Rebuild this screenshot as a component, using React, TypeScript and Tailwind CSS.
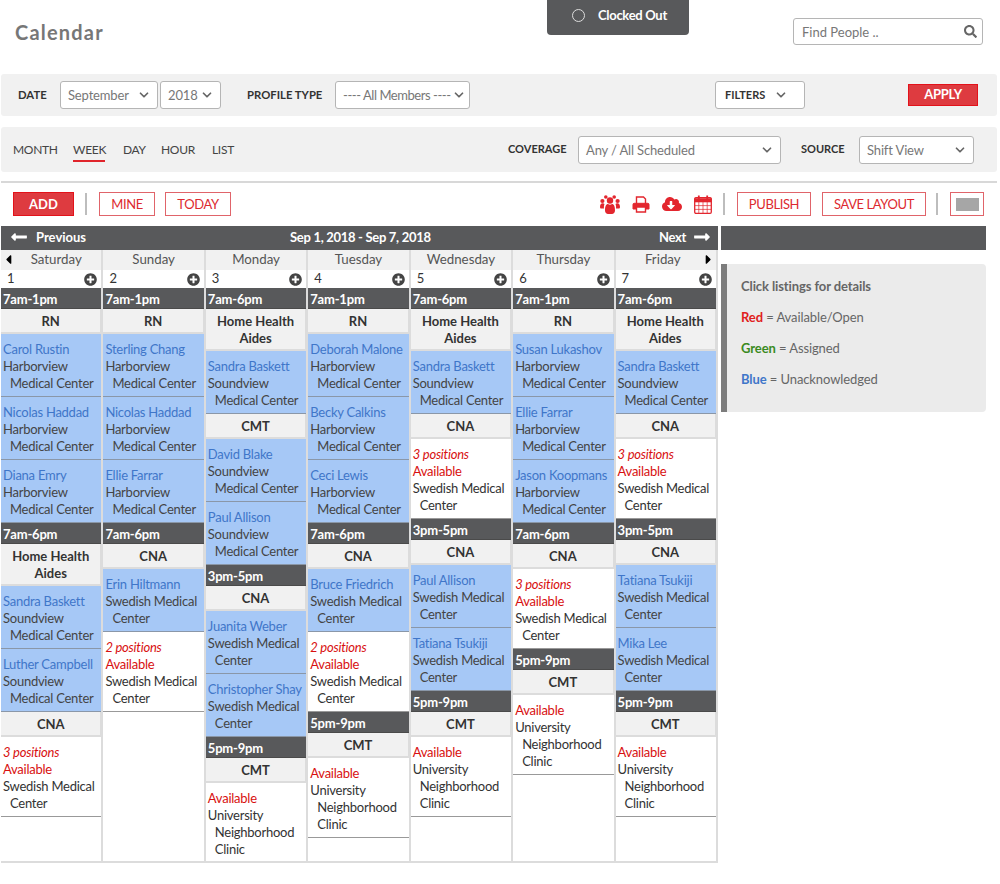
import { ChevronDown } from "lucide-react";
import {
  FaCloudDownloadAlt,
  FaSearch,
  FaPlusCircle,
  FaLongArrowAltLeft,
  FaLongArrowAltRight,
  FaCaretLeft,
  FaCaretRight,
} from "react-icons/fa";

type Item =
  | { t: "shift"; v: string }
  | { t: "role"; v: string }
  | { t: "p"; name: string; a: string; b: string }
  | { t: "open"; pos?: string; a: string; b: string; c?: string };

const shift = (v: string): Item => ({ t: "shift", v });
const role = (v: string): Item => ({ t: "role", v });
const hv = (name: string): Item => ({ t: "p", name, a: "Harborview", b: "Medical Center" });
const sv = (name: string): Item => ({ t: "p", name, a: "Soundview", b: "Medical Center" });
const sw = (name: string): Item => ({ t: "p", name, a: "Swedish Medical", b: "Center" });
const openSw = (pos: string): Item => ({ t: "open", pos, a: "Swedish Medical", b: "Center" });
const openU: Item = { t: "open", a: "University", b: "Neighborhood", c: "Clinic" };

const days: { d: string; n: number; items: Item[] }[] = [
  {
    d: "Saturday",
    n: 1,
    items: [
      shift("7am-1pm"), role("RN"), hv("Carol Rustin"), hv("Nicolas Haddad"), hv("Diana Emry"),
      shift("7am-6pm"), role("Home Health Aides"), sv("Sandra Baskett"), sv("Luther Campbell"),
      role("CNA"), openSw("3 positions"),
    ],
  },
  {
    d: "Sunday",
    n: 2,
    items: [
      shift("7am-1pm"), role("RN"), hv("Sterling Chang"), hv("Nicolas Haddad"), hv("Ellie Farrar"),
      shift("7am-6pm"), role("CNA"), sw("Erin Hiltmann"), openSw("2 positions"),
    ],
  },
  {
    d: "Monday",
    n: 3,
    items: [
      shift("7am-6pm"), role("Home Health Aides"), sv("Sandra Baskett"),
      role("CMT"), sv("David Blake"), sv("Paul Allison"),
      shift("3pm-5pm"), role("CNA"), sw("Juanita Weber"), sw("Christopher Shay"),
      shift("5pm-9pm"), role("CMT"), openU,
    ],
  },
  {
    d: "Tuesday",
    n: 4,
    items: [
      shift("7am-1pm"), role("RN"), hv("Deborah Malone"), hv("Becky Calkins"), hv("Ceci Lewis"),
      shift("7am-6pm"), role("CNA"), sw("Bruce Friedrich"), openSw("2 positions"),
      shift("5pm-9pm"), role("CMT"), openU,
    ],
  },
  {
    d: "Wednesday",
    n: 5,
    items: [
      shift("7am-6pm"), role("Home Health Aides"), sv("Sandra Baskett"),
      role("CNA"), openSw("3 positions"),
      shift("3pm-5pm"), role("CNA"), sw("Paul Allison"), sw("Tatiana Tsukiji"),
      shift("5pm-9pm"), role("CMT"), openU,
    ],
  },
  {
    d: "Thursday",
    n: 6,
    items: [
      shift("7am-1pm"), role("RN"), hv("Susan Lukashov"), hv("Ellie Farrar"), hv("Jason Koopmans"),
      shift("7am-6pm"), role("CNA"), openSw("3 positions"),
      shift("5pm-9pm"), role("CMT"), openU,
    ],
  },
  {
    d: "Friday",
    n: 7,
    items: [
      shift("7am-6pm"), role("Home Health Aides"), sv("Sandra Baskett"),
      role("CNA"), openSw("3 positions"),
      shift("3pm-5pm"), role("CNA"), sw("Tatiana Tsukiji"), sw("Mika Lee"),
      shift("5pm-9pm"), role("CMT"), openU,
    ],
  },
];

function UsersIcon() {
  return (
    <svg width="20" height="19" viewBox="0 0 20 19" className="ml-[369px] text-[#e3262e]" fill="currentColor">
      <circle cx="10" cy="5.500" r="3.200" />
      <circle cx="5.800" cy="2" r="1.800" />
      <circle cx="14.200" cy="2" r="1.800" />
      <circle cx="2.400" cy="6" r="2.100" />
      <circle cx="17.600" cy="6" r="2.100" />
      <path d="M0 12c0-2.500 1-3.800 2.500-3.800 1 0 1.500.3 2 .7C4 10 3.800 11.500 4 13.500H1c-.6 0-1-.6-1-1.500zM20 12c0-2.500-1-3.800-2.500-3.800-1 0-1.500.3-2 .7.500 1.100.700 2.600.500 4.600h3c.6 0 1-.6 1-1.500z" />
      <path d="M5 15.500c0-4.500 1.300-6.500 3-6.500.6.500 1.200.8 2 .8s1.400-.3 2-.8c1.700 0 3 2 3 6.500 0 2.300-1.500 3.500-3 3.500H8c-1.500 0-3-1.200-3-3.500z" />
    </svg>
  );
}

function PrintIcon() {
  return (
    <svg width="18" height="17" viewBox="0 0 18 17" className="ml-[12px] text-[#e3262e]" fill="none" stroke="currentColor">
      <path d="M4.500 8V1h7l2 2v5" strokeWidth="1.400" />
      <path d="M1 8.500c0-.8.500-1.200 1.200-1.200h13.600c.7 0 1.200.4 1.200 1.200V13h-16z" fill="currentColor" strokeWidth="1" />
      <path d="M4.500 11h9v5h-9z" fill="#fff" strokeWidth="1.400" />
    </svg>
  );
}

function CalIcon() {
  return (
    <svg width="18" height="19" viewBox="0 0 18 19" className="ml-[12px] text-[#e3262e]" fill="none" stroke="currentColor">
      <rect x="0.700" y="2.700" width="16.600" height="15.600" rx="1.200" strokeWidth="1.300" />
      <path d="M0.700 3.500h16.600v3.500H0.700z" fill="currentColor" strokeWidth="0.600" />
      <path d="M4.800 0.500v4M13.200 0.500v4" strokeWidth="1.800" />
      <path d="M4.800 7v11M9 7v11M13.200 7v11M1 10.600h16M1 14.400h16" strokeWidth="0.700" />
    </svg>
  );
}

function Select({ label, className }: { label: string; className: string }) {
  return (
    <div
      className={`flex items-center justify-between bg-white border border-[#b5b5b5] rounded-[3px] pl-[7px] pr-[6px] text-[#777] text-[13px] tracking-[-0.150px] ${className}`}
    >
      <span className="whitespace-nowrap pt-[2px]">{label}</span>
      <ChevronDown size={14} strokeWidth={3} className="text-[#666] shrink-0" />
    </div>
  );
}

function OutlineBtn({ label, className }: { label: string; className: string }) {
  return (
    <div
      className={`h-[24px] flex items-center justify-center border border-[#e0646a] text-[#dd2a30] text-[13px] tracking-[-0.400px] whitespace-nowrap pt-[2px] ${className}`}
    >
      {label}
    </div>
  );
}

function Divider({ className }: { className: string }) {
  return <div className={`w-[2px] h-[22px] bg-[#bdbdbd] ${className}`} />;
}

function Listing({ item }: { item: Item }) {
  if (item.t === "shift") {
    return (
      <div className="h-[21px] shrink-0 bg-[#58595b] text-white font-bold text-[13px] tracking-[-0.200px] leading-[22px] pl-[2px] border-b border-[#4a4a4a]">
        {item.v}
      </div>
    );
  }
  if (item.t === "role") {
    return (
      <div className="shrink-0 bg-[#f1f1f1] text-[#333] font-bold text-[13px] leading-[17px] text-center px-2 pt-[4px] pb-[2px] border-b-2 border-r border-[#dcdcdc]">
        {item.v}
      </div>
    );
  }
  if (item.t === "p") {
    return (
      <div className="h-[63px] shrink-0 bg-[#a6c8f6] text-[#444] text-[13px] tracking-[-0.250px] leading-[17px] pl-[2px] pt-[7px] border-b border-[#8a97a8] whitespace-nowrap overflow-hidden">
        <div className="text-[#3f76c9]">{item.name}</div>
        <div>{item.a}</div>
        <div className="pl-[7px]">{item.b}</div>
      </div>
    );
  }
  return (
    <div className="shrink-0 bg-white text-[#333] text-[13px] tracking-[-0.250px] leading-[17px] pl-[2px] pt-[7px] pb-[4px] border-b border-[#999] whitespace-nowrap">
      {item.pos && <div className="text-[#d81010] italic">{item.pos}</div>}
      <div className="text-[#d81010]">Available</div>
      <div>{item.a}</div>
      <div className="pl-[7px]">{item.b}</div>
      {item.c && <div className="pl-[7px]">{item.c}</div>}
    </div>
  );
}

export default function App() {
  return (
    <div className="w-[1000px] h-[884px] bg-white overflow-hidden font-['Lato','Noto_Sans',sans-serif] text-[#444]">
      <div className="h-[74px] flex items-start">
        <div className="ml-[15px] w-[532px] shrink-0 mt-[19px] text-[20px] leading-[27px] font-bold tracking-[1.200px] text-[#777]">Calendar</div>
        <div className="w-[142px] h-[35px] shrink-0 bg-[#58595b] rounded-b-[4px] flex items-start text-white text-[13px] tracking-[-0.300px] leading-[20px] font-bold pt-[5px] pl-[25px]">
          <span className="w-[13px] h-[13px] mt-[4px] rounded-full border border-[#ddd] mr-[13px]" />
          Clocked Out
        </div>
        <div className="ml-[104px] mt-[18px] w-[190px] h-[27px] shrink-0 flex items-center justify-between bg-white border border-[#b5b5b5] rounded-[3px] pl-[8px] pr-[5px] text-[13px] text-[#777]">
          <span className="pt-[2px]">Find People ..</span>
          <FaSearch size={13} className="text-[#666]" />
        </div>
      </div>

      <div className="ml-[1px] w-[996px] h-[42px] bg-[#f1f1f1] rounded-[3px] flex items-center">
        <span className="ml-[17px] w-[42px] text-[11.300px] font-bold text-[#333]">DATE</span>
        <Select label="September" className="w-[98px] h-[28px]" />
        <Select label="2018" className="ml-[2px] w-[61px] h-[28px]" />
        <span className="ml-[26px] w-[88px] text-[11.300px] font-bold text-[#333] whitespace-nowrap">PROFILE TYPE</span>
        <Select label="---- All Members ----" className="w-[135px] h-[28px] !pr-[3px] !tracking-[-0.450px]" />
        <div className="ml-[245px] w-[90px] h-[28px] bg-white border border-[#b5b5b5] rounded-[3px] flex items-center pl-[9px] gap-[9px] text-[11px] font-bold text-[#333]">
          FILTERS
          <ChevronDown size={14} strokeWidth={3} className="text-[#666]" />
        </div>
        <div className="ml-[103px] w-[70px] h-[22px] bg-[#de3b40] border border-[#e3121a] flex items-center justify-center text-white text-[13px] tracking-[-0.300px] font-bold">
          APPLY
        </div>
      </div>

      <div className="ml-[1px] mt-[11px] w-[996px] h-[45px] bg-[#f1f1f1] rounded-[3px] flex items-center text-[12px] tracking-[-0.300px] text-[#444]">
        <span className="ml-[12px] w-[60px]">MONTH</span>
        <span className="relative w-[50px]">
          WEEK
          <span className="absolute left-0 top-[19px] w-[32px] h-[2px] bg-[#e0242b]" />
        </span>
        <span className="w-[38px]">DAY</span>
        <span className="w-[51px]">HOUR</span>
        <span className="w-[296px]">LIST</span>
        <span className="w-[70px] text-[11px] tracking-normal font-bold text-[#333]">COVERAGE</span>
        <Select label="Any / All Scheduled" className="w-[203px] h-[28px]" />
        <span className="ml-[20px] w-[58px] text-[11px] tracking-normal font-bold text-[#333]">SOURCE</span>
        <Select label="Shift View" className="w-[115px] h-[28px]" />
      </div>

      <div className="ml-[1px] mt-[9px] w-[996px] h-[2px] bg-[#d8d8d8]" />

      <div className="mt-[9px] h-[24px] flex items-center">
        <div className="ml-[13px] w-[61px] h-[24px] bg-[#de3b40] border border-[#e3121a] flex items-center justify-center text-white text-[13px] font-bold pt-[2px]">
          ADD
        </div>
        <Divider className="ml-[11px]" />
        <OutlineBtn label="MINE" className="ml-[12px] w-[56px]" />
        <OutlineBtn label="TODAY" className="ml-[10px] w-[66px]" />
        <UsersIcon />
        <PrintIcon />
        <FaCloudDownloadAlt size={20} className="ml-[12px] text-[#e3262e]" />
        <CalIcon />
        <Divider className="ml-[11px]" />
        <OutlineBtn label="PUBLISH" className="ml-[12px] w-[74px]" />
        <OutlineBtn label="SAVE LAYOUT" className="ml-[11px] w-[104px]" />
        <Divider className="ml-[10px]" />
        <div className="ml-[12px] w-[34px] h-[24px] border border-[#e0646a] flex items-center justify-center">
          <div className="w-[23px] h-[13px] bg-[#a6a6a6]" />
        </div>
      </div>

      <div className="mt-[10px] flex items-start">
        <div className="ml-[1px] w-[717px] shrink-0">
          <div className="h-[24px] bg-[#58595b] text-white font-bold text-[13px] leading-[22px] flex items-start">
            <FaLongArrowAltLeft size={18} className="ml-[9px] mr-[8px] mt-[2px]" />
            <span className="w-[254px]">Previous</span>
            <span className="w-[369px] tracking-[-0.300px]">Sep 1, 2018 - Sep 7, 2018</span>
            <span className="w-[34px] tracking-[-0.300px]">Next</span>
            <FaLongArrowAltRight size={18} className="mt-[2px]" />
          </div>
          <div className="grid grid-cols-7 border-b-2 border-[#dcdcdc] h-[613px]">
            {days.map((day, i) => (
              <div key={day.d} className="flex flex-col min-w-0 border-r-2 border-[#dcdcdc] overflow-hidden">
                <div
                  className={`relative h-[20px] shrink-0 bg-[#f1f1f1] text-[#555] text-[13.300px] leading-[19px] text-center ${i === 0 ? "pl-[10px]" : ""} ${i === 6 ? "pr-[6px]" : ""}`}
                >
                  {i === 0 && <FaCaretLeft size={15} className="absolute left-[0px] top-[2px] text-black" />}
                  {day.d}
                  {i === 6 && <FaCaretRight size={15} className="absolute right-[0px] top-[2px] text-black" />}
                </div>
                <div className="h-[18px] shrink-0 bg-white flex items-center justify-between pl-[6px] pr-[4px] text-[13px] text-[#333]">
                  {day.n}
                  <FaPlusCircle size={13} className="text-[#444]" />
                </div>
                {day.items.map((it, j) => (
                  <Listing key={j} item={it} />
                ))}
              </div>
            ))}
          </div>
        </div>
        <div className="ml-[3px] w-[265px] shrink-0">
          <div className="h-[24px] bg-[#58595b]" />
          <div className="mt-[14px] h-[148px] bg-[#ebebeb] border-l-[6px] border-[#7c7c7c] rounded-r-[4px] pl-[14px] pt-[14px] text-[13px] tracking-[-0.100px] text-[#666]">
            <div className="font-bold leading-[17px]">Click listings for details</div>
            <div className="mt-[14px] leading-[17px]">
              <span className="font-bold text-[#e02020]">Red</span> = Available/Open
            </div>
            <div className="mt-[14px] leading-[17px]">
              <span className="font-bold text-[#3a8a1e]">Green</span> = Assigned
            </div>
            <div className="mt-[14px] leading-[17px]">
              <span className="font-bold text-[#3f76c9]">Blue</span> = Unacknowledged
            </div>
          </div>
        </div>
      </div>
    </div>
  );
}
